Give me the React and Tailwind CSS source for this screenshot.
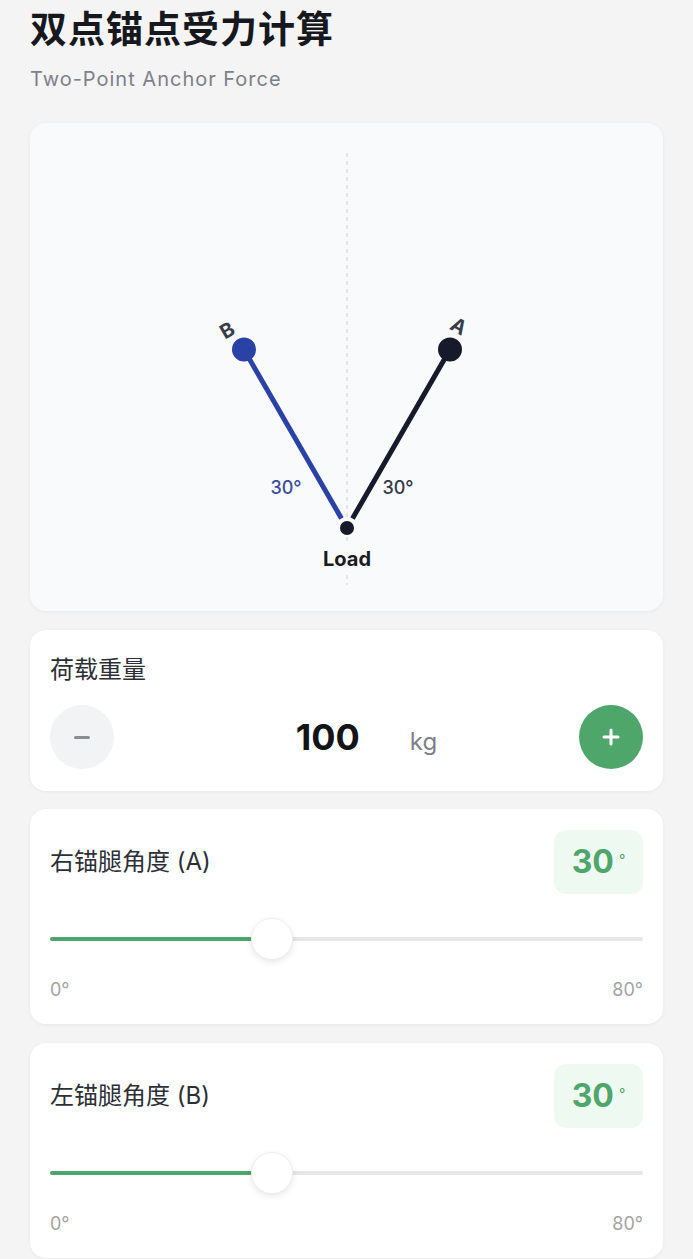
import { useState } from 'react'

const FONT = { fontFamily: 'Inter, "Noto Sans CJK SC", "Noto Sans", sans-serif' }

const BLUE = '#2a42a6'
const DARK = '#171a2b'

// anchor diagram, drawn in the card's own pixel space (633 x 488)
function AnchorDiagram({ angleA, angleB }) {
  const load = { x: 317, y: 405 }
  const len = 206
  const rad = (d) => (d * Math.PI) / 180
  const a = { x: load.x + len * Math.sin(rad(angleA)), y: load.y - len * Math.cos(rad(angleA)) }
  const b = { x: load.x - len * Math.sin(rad(angleB)), y: load.y - len * Math.cos(rad(angleB)) }
  const gap = 11
  const aEnd = { x: load.x + gap * Math.sin(rad(angleA)), y: load.y - gap * Math.cos(rad(angleA)) }
  const bEnd = { x: load.x - gap * Math.sin(rad(angleB)), y: load.y - gap * Math.cos(rad(angleB)) }

  return (
    <svg viewBox="0 0 633 488" width="633" height="488" className="block">
      <line x1={load.x} y1="30" x2={load.x} y2="418" stroke="#cfd2d6" strokeWidth="1" strokeDasharray="4 4" />
      <line x1={load.x} y1="452" x2={load.x} y2="462" stroke="#cfd2d6" strokeWidth="1" strokeDasharray="4 4" />

      <line x1={b.x} y1={b.y} x2={bEnd.x} y2={bEnd.y} stroke={BLUE} strokeWidth="5" />
      <line x1={a.x} y1={a.y} x2={aEnd.x} y2={aEnd.y} stroke={DARK} strokeWidth="5" />

      <circle cx={b.x} cy={b.y} r="12" fill={BLUE} />
      <circle cx={a.x} cy={a.y} r="12" fill={DARK} />
      <circle cx={load.x} cy={load.y} r="7" fill={DARK} />

      <text x={b.x - 16} y={b.y - 18} fontSize="20" fontWeight="700" fill="#3a3d48" textAnchor="middle" dominantBaseline="middle" transform={`rotate(-30 ${b.x - 16} ${b.y - 18})`}>B</text>
      <text x={a.x + 8} y={a.y - 22} fontSize="20" fontWeight="700" fill="#3a3d48" textAnchor="middle" dominantBaseline="middle" transform={`rotate(30 ${a.x + 8} ${a.y - 22})`}>A</text>

      <text x="256" y="366" fontSize="18" fontWeight="500" fill="#3b4d9c" textAnchor="middle" dominantBaseline="middle">{angleB}°</text>
      <text x="368" y="366" fontSize="18" fontWeight="500" fill="#343846" textAnchor="middle" dominantBaseline="middle">{angleA}°</text>

      <text x={load.x} y="438" fontSize="20" fontWeight="700" fill="#1b1c22" textAnchor="middle" dominantBaseline="middle">Load</text>
    </svg>
  )
}

function AngleCard({ label, value }) {
  const pct = (value / 80) * 100
  return (
    <div className="bg-white rounded-[16px] shadow-[0_1px_4px_rgba(0,0,0,0.05)] px-[20px] pt-[21px] pb-[25px]">
      <div className="flex items-center justify-between">
        <span className="text-[24px] text-[#2c2f36]">{label}</span>
        <div className="w-[89px] h-[64px] rounded-[12px] bg-[#eefaf1] flex items-center justify-center gap-[5px]">
          <span className="text-[32px] font-bold text-[#4ea66a] leading-none">{value}</span>
          <span className="text-[14px] text-[#4ea66a] leading-none -mt-[4px]">°</span>
        </div>
      </div>
      <div className="relative h-[42px] mt-[24px]">
        <div className="absolute left-0 right-0 top-[19px] h-[4px] rounded-full bg-[#e6e6e6]" />
        <div className="absolute left-0 top-[19px] h-[4px] rounded-full bg-[#4ea66a]" style={{ width: `${pct}%` }} />
        <div
          className="absolute top-0 w-[42px] h-[42px] -ml-[21px] rounded-full bg-white border border-[#eeeeee] shadow-[0_2px_6px_rgba(0,0,0,0.1)]"
          style={{ left: `${pct}%` }}
        />
      </div>
      <div className="flex justify-between mt-[21px] text-[18px] text-[#a3a3a3] leading-none">
        <span>0°</span>
        <span>80°</span>
      </div>
    </div>
  )
}

export default function App() {
  const [load, setLoad] = useState(100)
  const angleA = 30
  const angleB = 30

  return (
    <div className="min-h-screen bg-[#f4f4f5] px-[30px] pt-[6px] pb-[4px]" style={FONT}>
      <h1 className="text-[37px] font-bold text-[#16181d] leading-[48px] tracking-[1px]">双点锚点受力计算</h1>
      <p className="mt-[11px] text-[20px] text-[#7d8089] tracking-[1px] leading-[28px]">Two-Point Anchor Force</p>

      <div className="mt-[30px] bg-[#f9fafb] rounded-[16px] shadow-[0_1px_4px_rgba(0,0,0,0.05)] overflow-hidden">
        <AnchorDiagram angleA={angleA} angleB={angleB} />
      </div>

      <div className="mt-[19px] bg-white rounded-[16px] shadow-[0_1px_4px_rgba(0,0,0,0.05)] px-[20px] pt-[24px] pb-[22px]">
        <div className="text-[24px] text-[#2c2f36] leading-[32px]">荷载重量</div>
        <div className="mt-[19px] flex items-center">
          <button
            onClick={() => setLoad((v) => Math.max(0, v - 10))}
            className="w-[64px] h-[64px] rounded-full bg-[#f2f3f5] flex items-center justify-center"
          >
            <span className="block w-[16px] h-[3px] rounded-full bg-[#8a8d94]" />
          </button>
          <div className="flex-1 flex items-baseline justify-center">
            <span className="text-[36px] font-bold text-[#121418] ml-[40px]">{load}</span>
            <span className="text-[24px] text-[#7d8089] ml-[50px]">kg</span>
          </div>
          <button
            onClick={() => setLoad((v) => v + 10)}
            className="w-[64px] h-[64px] rounded-full bg-[#4ea66a] flex items-center justify-center text-white"
          >
            <svg width="18" height="18" viewBox="0 0 18 18">
              <path d="M9 2v14M2 9h14" stroke="white" strokeWidth="3" strokeLinecap="round" />
            </svg>
          </button>
        </div>
      </div>

      <div className="mt-[18px]">
        <AngleCard label="右锚腿角度 (A)" value={angleA} />
      </div>
      <div className="mt-[19px]">
        <AngleCard label="左锚腿角度 (B)" value={angleB} />
      </div>
    </div>
  )
}
